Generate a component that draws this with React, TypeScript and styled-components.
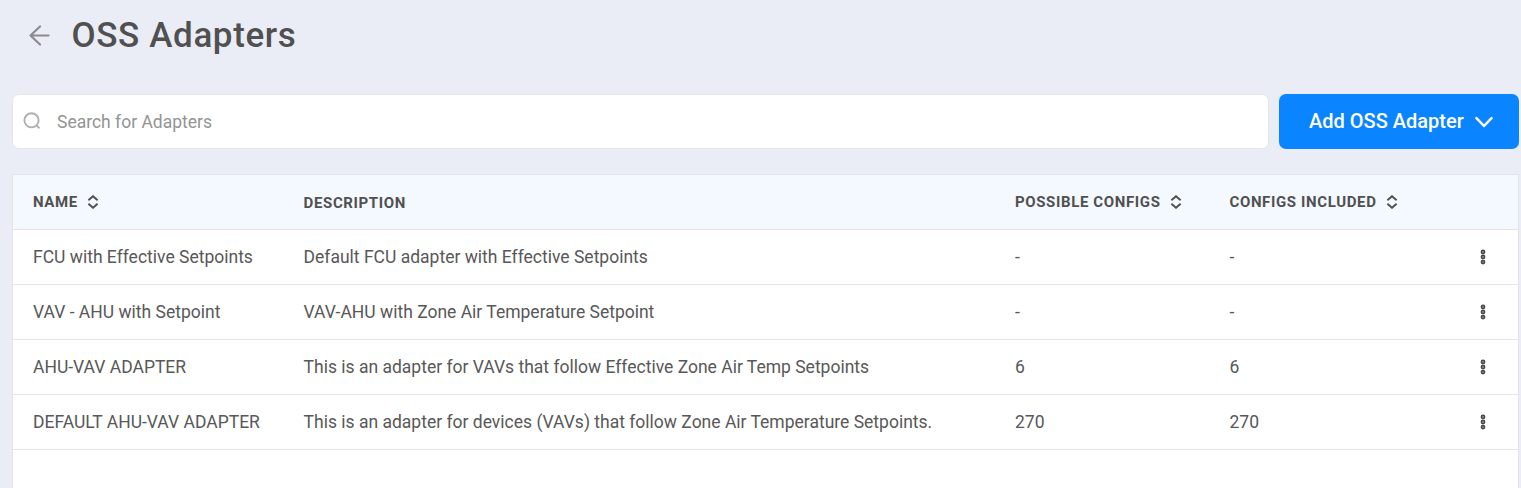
import React from "react";
import styled, { createGlobalStyle } from "styled-components";

const GlobalStyle = createGlobalStyle`
  *, *::before, *::after { box-sizing: border-box; }
  html, body { margin: 0; height: 100%; overflow: hidden; background: #eaedf5; }
  #root { height: 100%; }
  body, button, input { font-family: Roboto, "Liberation Sans", sans-serif; }
`;

const Page = styled.main`
  height: 100vh;
  display: flex;
  flex-direction: column;
  padding: 0 2px 0 12px;
  overflow: hidden;
  color: #505050;
`;

const Header = styled.header`
  display: flex;
  align-items: center;
  height: 70px;
  padding-left: 16px;
`;

const BackButton = styled.button`
  display: flex;
  width: 22px;
  height: 22px;
  padding: 0;
  border: 0;
  background: none;
  color: #8a8b8e;
`;

const Title = styled.h1`
  margin: 0 0 0 21.5px;
  padding-top: 2px;
  font-size: 35px;
  line-height: 42px;
  font-weight: 500;
  letter-spacing: 0.625px;
  color: #505050;
`;

const Toolbar = styled.div`
  display: flex;
  align-items: center;
  gap: 10px;
  margin-top: 24px;
`;

const SearchBox = styled.label`
  flex: 1;
  display: flex;
  align-items: center;
  height: 55px;
  padding-left: 10px;
  border: 1px solid #e4e6ec;
  border-radius: 7px;
  background: #fff;
  color: #b0b0b0;
`;

const SearchInput = styled.input`
  flex: 1;
  margin-left: 15px;
  padding: 0;
  border: 0;
  outline: 0;
  background: none;
  font-size: 17.5px;
  &::placeholder { color: #949494; opacity: 1; }
`;

const AddButton = styled.button`
  display: flex;
  align-items: center;
  gap: 11px;
  width: 240px;
  height: 55px;
  padding: 0 0 1px 30px;
  border: 0;
  border-radius: 7px;
  background: #0a85ff;
  color: #fff;
  font-size: 20px;
  font-weight: 500;
  white-space: nowrap;

  svg { margin-top: 1px; }
`;

const Table = styled.div`
  flex: 1;
  margin-top: 25px;
  border: 1px solid #e2e4e8;
  border-bottom: 0;
  background: #fff;
`;

const Row = styled.div<{ $head?: boolean }>`
  display: grid;
  grid-template-columns: 270.6px 711.4px 214.5px 1fr 42px;
  align-items: center;
  height: 55px;
  padding-left: 20px;
  border-bottom: 1px solid #e2e4e8;
  background: ${(p) => (p.$head ? "#f4f9ff" : "#fff")};
`;

const HeadCell = styled.div<{ $plain?: boolean }>`
  display: flex;
  align-items: center;
  gap: 9px;
  padding-top: ${(p) => (p.$plain ? "2px" : "0")};
  font-size: 15px;
  line-height: 20px;
  font-weight: 700;
  letter-spacing: 0.625px;
  white-space: nowrap;
`;

const Cell = styled.div`
  color: #585858;
  font-size: 17.5px;
  line-height: 24px;
  white-space: nowrap;
`;

const MenuButton = styled.button`
  display: flex;
  width: 14px;
  height: 18px;
  padding: 0;
  border: 0;
  background: none;
`;

const SortIcon = () => (
  <svg width="12" height="14" viewBox="0 0 12 14" fill="none" stroke="#505050" strokeWidth="1.9">
    <path d="M1.4 5.2 6 1.2l4.6 4M1.4 8.8 6 12.8l4.6-4" />
  </svg>
);

const DotsIcon = () => (
  <svg width="14" height="18" viewBox="0 0 14 18" fill="#909090" stroke="#484848" strokeWidth="1.5">
    <circle cx="7" cy="3.9" r="1.65" />
    <circle cx="7" cy="9" r="1.65" />
    <circle cx="7" cy="14.1" r="1.65" />
  </svg>
);

const columns = [
  { label: "NAME", sortable: true },
  { label: "DESCRIPTION", sortable: false },
  { label: "POSSIBLE CONFIGS", sortable: true },
  { label: "CONFIGS INCLUDED", sortable: true },
];

const adapters = [
  ["FCU with Effective Setpoints", "Default FCU adapter with Effective Setpoints", "-", "-"],
  ["VAV - AHU with Setpoint", "VAV-AHU with Zone Air Temperature Setpoint", "-", "-"],
  ["AHU-VAV ADAPTER", "This is an adapter for VAVs that follow Effective Zone Air Temp Setpoints", "6", "6"],
  ["DEFAULT AHU-VAV ADAPTER", "This is an adapter for devices (VAVs) that follow Zone Air Temperature Setpoints.", "270", "270"],
];

export default function App() {
  return (
    <>
      <GlobalStyle />
      <Page>
        <Header>
          <BackButton aria-label="Back">
            <svg width="22" height="22" viewBox="0 0 22 22" fill="none" stroke="currentColor" strokeWidth="2.2" strokeLinecap="round" strokeLinejoin="round">
              <path d="M20.5 11.5H2.5M12 2.5l-9.5 9 9.5 9" />
            </svg>
          </BackButton>
          <Title>OSS Adapters</Title>
        </Header>
        <Toolbar>
          <SearchBox>
            <svg width="19" height="19" viewBox="0 0 19 19" fill="none" stroke="currentColor" strokeWidth="1.9">
              <circle cx="8.5" cy="8.3" r="7.1" />
              <path d="m13.2 13 3.3 3.3" />
            </svg>
            <SearchInput placeholder="Search for Adapters" />
          </SearchBox>
          <AddButton>
            Add OSS Adapter
            <svg width="19" height="12" viewBox="0 0 19 12" fill="none" stroke="currentColor" strokeWidth="2.5" strokeLinecap="round" strokeLinejoin="round">
              <path d="m1.5 2.2 7.5 7.8 7.5-7.8" />
            </svg>
          </AddButton>
        </Toolbar>
        <Table>
          <Row $head>
            {columns.map((c) => (
              <HeadCell key={c.label} $plain={!c.sortable}>
                {c.label}
                {c.sortable && <SortIcon />}
              </HeadCell>
            ))}
          </Row>
          {adapters.map((cells) => (
            <Row key={cells[0]}>
              {cells.map((text, i) => (
                <Cell key={i}>{text}</Cell>
              ))}
              <MenuButton aria-label="Actions">
                <DotsIcon />
              </MenuButton>
            </Row>
          ))}
        </Table>
      </Page>
    </>
  );
}
